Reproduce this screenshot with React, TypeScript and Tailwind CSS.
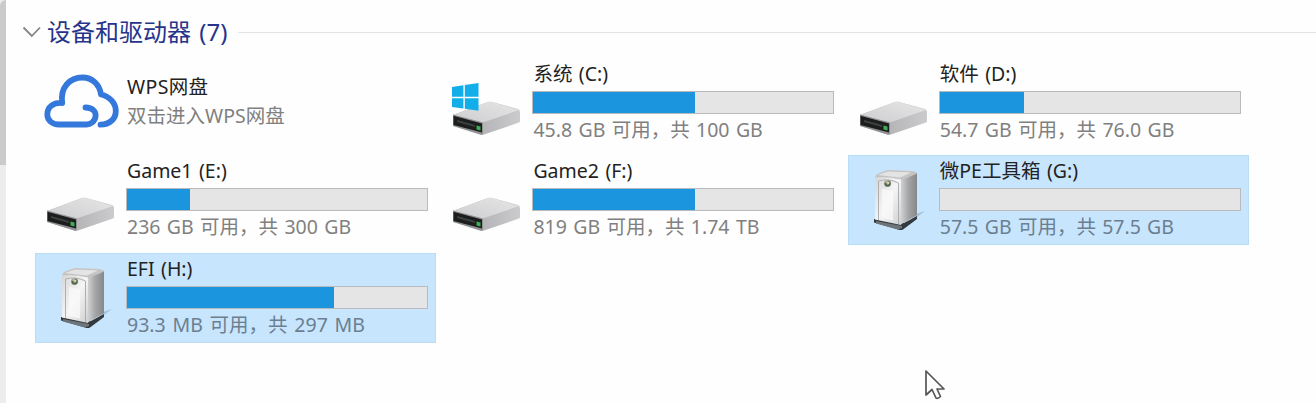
import { ReactNode } from "react";

function Disk({ system = false }: { system?: boolean }) {
  return (
    <svg width="72" height="62" viewBox="0 0 72 62" className="block">
      <defs>
        <linearGradient id="top" x1="0" y1="1" x2="1" y2="0">
          <stop offset="0" stopColor="#cdcdcf" />
          <stop offset="1" stopColor="#e6e6e7" />
        </linearGradient>
        <linearGradient id="side" x1="0" y1="0" x2="1" y2="0">
          <stop offset="0" stopColor="#a4a4a6" />
          <stop offset="1" stopColor="#cbcbce" />
        </linearGradient>
      </defs>
      <path d="M3 39 L38 26 Q40 25.4 42 26 L68 33 Q70 34 70 36 V45 Q70 46 69 46.6 L34 58.5 Q32 59.3 30 58.6 L4 50 Q3 49.7 3 48.5 Z" fill="url(#side)" />
      <path d="M3 39 L38 26 Q40 25.4 42 26 L69 34 L33 46.5 Z" fill="url(#top)" />
      <path d="M3 38.5 L33 46.5 V58 L31 58.8 L3 50 Z" fill="#929295" />
      <path d="M3.5 39.7 L32 47.5 V56.5 L3.5 49 Z" fill="#1c1e1e" />
      <path d="M7 44 L25 49 V51 L7 46 Z" fill="#3f4141" />
      <path d="M26.5 49.5 L30.5 50.4 V54.6 L26.5 53.6 Z" fill="#3fae57" />
      {system && (
        <path d="M2 11 L13.4 9.3 V20.8 H2 Z M14.8 9 L28.5 7 V20.8 H14.8 Z M2 22.2 H13.4 V32.6 L2 31 Z M14.8 22.2 H28.5 V34.7 L14.8 32.8 Z" fill="#12aeea" />
      )}
    </svg>
  );
}

function Tower() {
  return (
    <svg width="72" height="70" viewBox="0 0 72 70" className="block">
      <defs>
        <linearGradient id="front" x1="0" y1="0" x2="1" y2="1">
          <stop offset="0" stopColor="#d7d7d7" />
          <stop offset=".5" stopColor="#f5f5f5" />
          <stop offset="1" stopColor="#cfcfd0" />
        </linearGradient>
        <linearGradient id="flank" x1="0" y1="0" x2="1" y2="0">
          <stop offset="0" stopColor="#dedede" />
          <stop offset=".5" stopColor="#a5a6a8" />
          <stop offset="1" stopColor="#858789" />
        </linearGradient>
      </defs>
      <path d="M45 62 L65 47 L56 50 Z" fill="#8aa5ba" opacity=".55" />
      <path d="M14 55 L44 59 L57 52 V55 L43 65.5 Q41 66.5 38 65.5 L14 58.5 Z" fill="#34393d" />
      <path d="M16 59.5 L38 65.5 L42 64 V62 L16 57 Z" fill="#6d757a" />
      <path d="M39 15 L54 8 Q57 8 57 11 V51 L40 61 Z" fill="url(#flank)" />
      <path d="M15 15 Q15 11 18 9.5 L28 6 L52 7 Q57 7.6 56 10 L42 16 Z" fill="#c4c4c5" />
      <path d="M18 11 L28 7.4 L51 8.4 L40 13.5 Z" fill="#e4e4e4" />
      <path d="M15 13.5 Q28 12.2 41 15.5 V61 L15 55.5 Z" fill="url(#front)" />
      <path d="M18.5 17 Q28 14 38.5 19 V60 M18.5 17 V56" fill="none" stroke="#a8a8a9" strokeWidth=".9" />
      <path d="M22 25 V54 L33 56.5 V27 Z" fill="#fafafa" opacity=".75" />
      <circle cx="27.5" cy="19.5" r="3.6" fill="#a7aa9c" />
      <path d="M25.5 19 A2.2 2.2 0 1 0 28 17.3" fill="none" stroke="#4d6650" strokeWidth="1.8" />
      <circle cx="28.3" cy="18.7" r="1.2" fill="#d8d9a0" />
    </svg>
  );
}

function Cloud() {
  return (
    <svg width="76" height="56" viewBox="0 0 76 56" fill="none" stroke="#3478dc" strokeWidth="5.8" strokeLinecap="round" strokeLinejoin="round" className="block">
      <path d="M41.5 33.5 C49 33.5 52 38 51.6 42 C51.1 48 46 50.5 42.5 50.5 H15 C8 50.5 3.3 46 3.3 40.5 C3.3 33 9 28.5 18.2 29 C16 13 26 3.5 38.5 3.5 C48 3.5 55.5 10 57 20.5 C66 22.5 71.8 29.5 71.8 37.2 C71.8 45 65.5 50.5 56.5 50.7" />
    </svg>
  );
}

interface TileProps {
  icon: ReactNode;
  iconClass: string;
  name: string;
  info: string;
  nameClass?: string;
  infoClass?: string;
  used?: number;
  selected?: boolean;
}

function Tile({ icon, iconClass, name, info, nameClass = "[word-spacing:1.4px]", infoClass = "[word-spacing:1.3px]", used, selected }: TileProps) {
  return (
    <div className={"flex h-[90px] w-[401px] border " + (selected ? "border-[#b9dcf7] bg-[#c8e5fe]" : "border-transparent")}>
      <div className={"w-[90px] shrink-0 " + iconClass}>{icon}</div>
      <div className={"flex flex-col whitespace-nowrap text-[19.5px] leading-6 " + (used === undefined ? "pt-4" : "pt-[3px]")}>
        <div className={"h-6 pl-px text-[#222222] " + nameClass}>{name}</div>
        {used !== undefined && (
          <div className="mt-[5px] h-[23px] w-[302px] border border-[#b9babd] bg-[#e5e5e6]">
            <div className="h-full bg-[#1b95de]" style={{ width: `${used}%` }} />
          </div>
        )}
        <div className={"h-6 pl-px " + (used === undefined ? "mt-[5px] " : "mt-[4px] ") + (selected ? "text-[#6b7f90] " : "text-[#808080] ") + infoClass}>{info}</div>
      </div>
    </div>
  );
}

export default function App() {
  return (
    <div className="relative flex h-[403px] w-[1316px] overflow-hidden bg-[#fefefe] font-['Noto_Sans','Noto_Sans_CJK_SC',sans-serif]">
      <div className="h-full w-[6px] shrink-0 bg-[#ededef]">
        <div className="h-[165px] rounded-tl-md bg-[#cbcbcc]" />
      </div>
      <main className="flex-1">
        <div className="flex h-[57.6px] items-center pl-4 pt-[7px]">
          <svg width="20" height="14" viewBox="0 0 20 14" fill="none" stroke="#858585" strokeWidth="1.8">
            <path d="M1.5 2.5 L9.8 11 L18 2.5" />
          </svg>
          <h2 className="ml-[5px] whitespace-nowrap text-[24px] leading-8 text-[#27348b] [word-spacing:2px]">设备和驱动器 (7)</h2>
          <div className="ml-[11px] h-px flex-1 bg-[#e3e3e5]" />
        </div>
        <div className="grid grid-cols-[repeat(3,401px)] gap-x-[5.4px] gap-y-[7.5px] pl-[29px]">
          <Tile icon={<Cloud />} iconClass="pl-[8px] pt-[15px]" name="WPS网盘" info="双击进入WPS网盘" nameClass="tracking-[0.35px]" />
          <Tile icon={<Disk system />} iconClass="pl-[8px] pt-[17px]" name="系统 (C:)" info="45.8 GB 可用，共 100 GB" used={54} />
          <Tile icon={<Disk />} iconClass="pl-[8px] pt-[17px]" name="软件 (D:)" info="54.7 GB 可用，共 76.0 GB" used={28} />
          <Tile icon={<Disk />} iconClass="pl-[8px] pt-[16px]" name="Game1 (E:)" info="236 GB 可用，共 300 GB" used={21} />
          <Tile icon={<Disk />} iconClass="pl-[8px] pt-[16px]" name="Game2 (F:)" info="819 GB 可用，共 1.74 TB" used={54} />
          <Tile icon={<Tower />} iconClass="pl-[11px] pt-[8px]" name="微PE工具箱 (G:)" info="57.5 GB 可用，共 57.5 GB" used={0} selected infoClass="[word-spacing:1.2px]" />
          <Tile icon={<Tower />} iconClass="pl-[11px] pt-[8px]" name="EFI (H:)" info="93.3 MB 可用，共 297 MB" used={69} selected infoClass="[word-spacing:1.7px]" />
        </div>
      </main>
      <svg width="22" height="32" viewBox="0 0 22 32" className="absolute left-[924px] top-[369px]">
        <path d="M2 2 V26 L8 20.5 L12 29 Q14 30 16.5 27.5 L13 20 H20 Z" fill="#fff" stroke="#555" strokeWidth="1.7" strokeLinejoin="round" />
      </svg>
    </div>
  );
}
